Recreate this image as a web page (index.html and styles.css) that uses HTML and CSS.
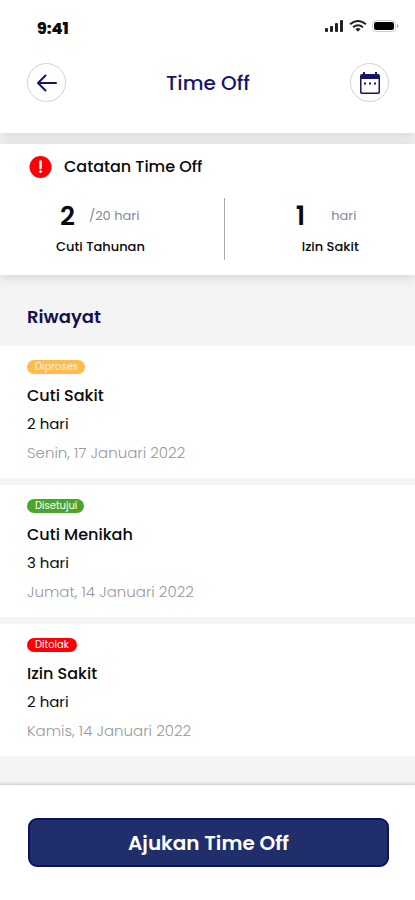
FILE: index.html
```html
<!DOCTYPE html>
<html lang="id">
<head>
<meta charset="utf-8">
<meta name="viewport" content="width=device-width, initial-scale=1">
<title>Time Off</title>
<link rel="stylesheet" href="styles.css">
</head>
<body>
<div class="app">
  <header class="header">
    <div class="status">
      <span class="clock">9:41</span>
      <svg class="status-icons" width="76" height="14" viewBox="0 0 76 14" aria-hidden="true">
        <g fill="#222">
          <rect x="2" y="8" width="3" height="4" rx="1"/>
          <rect x="7" y="6" width="3" height="6" rx="1"/>
          <rect x="12" y="3" width="3" height="9" rx="1"/>
          <rect x="17" y="0" width="3" height="12" rx="1"/>
        </g>
        <g fill="none" stroke="#222" stroke-width="2">
          <path d="M27 4.2Q35 -2.2 43 4.2"/>
          <path d="M30 7.2Q35 3.2 40 7.2"/>
        </g>
        <path d="M32.400 9Q35 7.2 37.600 9L35 11.700Z" fill="#222"/>
        <rect x="49.500" y="0.500" width="23" height="11" rx="3" fill="#fff" stroke="#ccc"/>
        <rect x="51" y="2" width="20" height="8" rx="2" fill="#000"/>
        <path d="M74 4v4q1.500-.5 1.500-2T74 4Z" fill="#aaa"/>
      </svg>
    </div>
    <nav class="bar">
      <button class="round" type="button" aria-label="Kembali">
        <svg width="22" height="20" viewBox="0 0 22 20" fill="none" stroke="#15156b" stroke-width="2" stroke-linecap="round" stroke-linejoin="round"><path d="M20 10H2M9.500 2.500L2 10L9.500 17.500"/></svg>
      </button>
      <h1 class="title">Time Off</h1>
      <button class="round" type="button" aria-label="Kalender">
        <svg width="20" height="22" viewBox="0 0 20 22"><path d="M3 0h2v2h10V0h2v2h1q2 0 2 2v16q0 2-2 2H2q-2 0-2-2V4q0-2 2-2h1ZM1.500 7v12.500q0 1 1 1h15q1 0 1-1V7Z" fill="#15156b" fill-rule="evenodd"/><path d="M4 10.500h2v2H4ZM9 10.500h2v2H9ZM14 10.500h2v2h-2Z" fill="#15156b"/></svg>
      </button>
    </nav>
  </header>

  <section class="summary">
    <div class="summary-head">
      <svg width="24" height="22" viewBox="0 0 24 22" aria-hidden="true"><circle cx="12.500" cy="11" r="11" fill="#fb0007"/><path d="M12.500 5.500v6.500" stroke="#fff" stroke-width="2.600" stroke-linecap="round"/><circle cx="12.500" cy="15.700" r="1.400" fill="#fff"/></svg>
      <h2 class="summary-title">Catatan Time Off</h2>
    </div>
    <div class="stats">
      <div class="stat">
        <p class="amount"><strong class="number">2</strong><span class="unit">/20 hari</span></p>
        <p class="label">Cuti Tahunan</p>
      </div>
      <div class="stat stat-sick">
        <p class="amount"><strong class="number">1</strong><span class="unit">hari</span></p>
        <p class="label">Izin Sakit</p>
      </div>
    </div>
  </section>

  <main class="history">
    <h2 class="history-title">Riwayat</h2>
    <ul class="list">
      <li class="entry">
        <span class="badge pending">Diproses</span>
        <h3 class="name">Cuti Sakit</h3>
        <p class="days">2 hari</p>
        <p class="date">Senin, 17 Januari 2022</p>
      </li>
      <li class="entry">
        <span class="badge approved">Disetujui</span>
        <h3 class="name">Cuti Menikah</h3>
        <p class="days">3 hari</p>
        <p class="date">Jumat, 14 Januari 2022</p>
      </li>
      <li class="entry">
        <span class="badge rejected">Ditolak</span>
        <h3 class="name">Izin Sakit</h3>
        <p class="days">2 hari</p>
        <p class="date">Kamis, 14 Januari 2022</p>
      </li>
    </ul>
  </main>

  <footer class="footer">
    <button class="submit" type="button">Ajukan Time Off</button>
  </footer>
</div>
</body>
</html>
```
FILE: styles.css
```css
* { box-sizing: border-box; }

body, h1, h2, h3, p, ul { margin: 0; padding: 0; }

body {
  background: #f4f4f4;
  color: #0a0a0a;
  font-family: Poppins, Inter, sans-serif;
}

button { font-family: inherit; cursor: pointer; }

.app {
  min-height: 100vh;
  display: flex;
  flex-direction: column;
}

.header {
  background: #fff;
  padding: 17px 26px 31px 27px;
  box-shadow: 0 2px 12px rgba(0, 0, 0, 0.14);
}

.status {
  display: flex;
  justify-content: space-between;
  align-items: center;
  height: 24px;
  margin: 0 -10px 22px 10px;
}

.clock {
  font-size: 16px;
  line-height: 24px;
  font-weight: 800;
}

.status-icons { margin-bottom: 4px; }

.bar {
  display: flex;
  justify-content: space-between;
  align-items: center;
}

.round {
  width: 39px;
  height: 39px;
  padding: 0;
  display: flex;
  align-items: center;
  justify-content: center;
  border: 1px solid #d2d2d2;
  border-radius: 50%;
  background: #fff;
}

.title {
  color: #15156b;
  font-size: 20px;
  line-height: 28px;
  font-weight: 500;
}

.summary {
  margin-top: 11px;
  padding: 12px 28px 15px;
  background: #fff;
  box-shadow: 0 2px 12px rgba(0, 0, 0, 0.14);
}

.summary-head {
  display: flex;
  align-items: center;
  gap: 12px;
  margin-bottom: 20px;
}

.summary-title {
  font-size: 16px;
  line-height: 22px;
  font-weight: 500;
}

.stats {
  display: grid;
  grid-template-columns: 6fr 5fr;
}

.stat {
  padding-left: 28px;
}

.stat + .stat {
  border-left: 1px solid #aaa;
  padding-left: 71px;
}

.amount {
  display: flex;
  align-items: center;
  gap: 14px;
  height: 36px;
  padding-left: 4px;
}

.stat-sick .amount {
  gap: 26px;
  padding-left: 0;
}

.number {
  font-size: 26px;
  line-height: 36px;
  font-weight: 600;
}

.unit {
  color: #858a9c;
  font-size: 13px;
  line-height: 20px;
}

.label {
  font-size: 13px;
  line-height: 26px;
  font-weight: 500;
}

.stat-sick .label { padding-left: 6px; }

.history-title {
  padding: 30px 27px 17px;
  color: #15104f;
  font-size: 18px;
  line-height: 24px;
  font-weight: 600;
}

.list {
  list-style: none;
  display: grid;
  gap: 7px;
}

.entry {
  display: flex;
  flex-direction: column;
  align-items: flex-start;
  padding: 14px 27px 10px;
  background: #fff;
}

.badge {
  min-width: 50px;
  padding: 0 7px 0 8px;
  margin-bottom: 8px;
  border-radius: 7px;
  color: #fff;
  font-size: 10px;
  line-height: 14px;
}

.pending { background: #fdbb50; color: #fff0d8; }
.approved { background: #4aa52e; }
.rejected { background: #fb0007; }

.name {
  font-size: 16px;
  line-height: 28px;
  font-weight: 500;
}

.days {
  font-size: 15px;
  line-height: 28px;
}

.date {
  color: #999;
  font-size: 15px;
  line-height: 30px;
  font-weight: 300;
}

.footer {
  flex: 1;
  margin-top: 29px;
  padding: 33px 26px 32px 28px;
  background: #fff;
  box-shadow: 0 -1px 3px rgba(20, 20, 80, 0.22);
}

.submit {
  width: 100%;
  height: 49px;
  padding: 0;
  border: 2px solid #0b1260;
  border-radius: 9px;
  background: #202e6c;
  color: #fff;
  font-size: 20px;
  line-height: 28px;
  font-weight: 600;
}
```
